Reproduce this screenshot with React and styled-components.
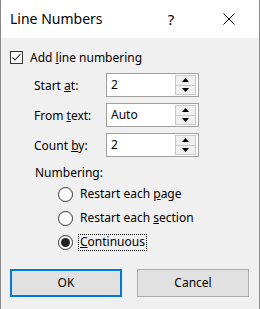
import React from "react";
import styled, { createGlobalStyle } from "styled-components";

const Global = createGlobalStyle`
  html, body { margin: 0; padding: 0; background: #f0f0f0; }
  body { font-family: "Segoe UI", "Noto Sans", "Open Sans", sans-serif; }
`;

const Window = styled.div`
  width: 260px;
  height: 309px;
  box-sizing: border-box;
  border-left: 1px solid #8a8a8a;
  border-right: 1px solid #8a8a8a;
  background: #f0f0f0;
  display: flex;
  flex-direction: column;
  color: #000;
  font-size: 12px;
`;

const TitleBar = styled.div`
  height: 38px;
  background: #fff;
  display: flex;
  align-items: center;
  padding-left: 9px;
  padding-right: 7px;
  flex-shrink: 0;
`;

const Title = styled.div`
  font-size: 14px;
  flex: 1;
  padding-bottom: 1px;
`;

const TitleButton = styled.div`
  width: 46px;
  margin-right: ${(p) => p.$gap || 0}px;
  display: flex;
  justify-content: center;
  align-items: center;
  font-size: 15px;
`;

const Body = styled.div`
  display: flex;
  flex-direction: column;
  padding: 12px 9px 0 9px;
`;

const CheckRow = styled.label`
  display: flex;
  align-items: center;
  height: 14px;
  gap: 7px;
`;

const CheckBox = styled.span`
  width: 13px;
  height: 13px;
  box-sizing: border-box;
  border: 1px solid #333;
  background: #fff;
  display: flex;
  align-items: center;
  justify-content: center;
`;

const Fields = styled.div`
  display: flex;
  flex-direction: column;
  gap: 6px;
  margin-top: 9px;
  padding-left: 24px;
`;

const FieldRow = styled.div`
  display: grid;
  grid-template-columns: 72px 93px;
  align-items: center;
  height: 24px;
`;

const SpinBox = styled.div`
  height: 24px;
  box-sizing: border-box;
  border: 1px solid #a0a0a0;
  background: #fff;
  display: flex;
  align-items: stretch;
  padding: 1px 2px 1px 0;
`;

const SpinValue = styled.div`
  flex: 1;
  display: flex;
  align-items: center;
  padding-left: 4px;
  padding-bottom: 1px;
`;

const SpinButtons = styled.div`
  width: 21px;
  display: flex;
  flex-direction: column;
`;

const SpinButton = styled.div`
  flex: 1;
  box-sizing: border-box;
  border: 1px solid #c8c8c8;
  background: #f0f0f0;
  display: flex;
  align-items: center;
  justify-content: center;
  & + & { border-top: none; }
`;

const GroupLabel = styled.div`
  margin-top: 7px;
  padding-left: 25px;
  height: 16px;
  display: flex;
  align-items: center;
`;

const Radios = styled.div`
  display: flex;
  flex-direction: column;
  gap: 9px;
  margin-top: 7px;
  padding-left: 48px;
`;

const RadioRow = styled.div`
  display: flex;
  align-items: center;
  gap: 6px;
  height: 15px;
`;

const RadioCircle = styled.span`
  width: 15px;
  height: 15px;
  box-sizing: border-box;
  border-radius: 50%;
  border: 1px solid #333;
  background: #fff;
  display: flex;
  align-items: center;
  justify-content: center;
  &::after {
    content: "";
    display: ${(p) => (p.$on ? "block" : "none")};
    width: 9px;
    height: 9px;
    border-radius: 50%;
    background: #222;
  }
`;

const RadioText = styled.span`
  padding: 0 1px 1px 1px;
  outline: ${(p) => (p.$focus ? "1px dotted #000" : "none")};
  line-height: 14px;
`;

const ButtonRow = styled.div`
  display: flex;
  gap: 15px;
  margin-top: 19px;
`;

const Button = styled.div`
  width: 112px;
  height: 28px;
  box-sizing: border-box;
  background: #e1e1e1;
  border: ${(p) => (p.$primary ? "2px solid #0078d7" : "1px solid #adadad")};
  display: flex;
  align-items: center;
  justify-content: center;
  font-size: 12px;
  padding-bottom: 1px;
`;

const Up = () => (
  <svg width="7" height="4" viewBox="0 0 7 4"><path d="M0 4 L3.5 0 L7 4 Z" fill="#000" /></svg>
);
const Down = () => (
  <svg width="7" height="4" viewBox="0 0 7 4"><path d="M0 0 L7 0 L3.5 4 Z" fill="#000" /></svg>
);

const Spin = ({ label, value }) => (
  <FieldRow>
    <span>{label}</span>
    <SpinBox>
      <SpinValue>{value}</SpinValue>
      <SpinButtons>
        <SpinButton><Up /></SpinButton>
        <SpinButton><Down /></SpinButton>
      </SpinButtons>
    </SpinBox>
  </FieldRow>
);

export default function App() {
  return (
    <>
      <Global />
      <Window>
        <TitleBar>
          <Title>Line Numbers</Title>
          <TitleButton $gap={12}>?</TitleButton>
          <TitleButton>
            <svg width="12" height="12" viewBox="0 0 12 12">
              <path d="M0.5 0.5 L11.5 11.5 M11.5 0.5 L0.5 11.5" stroke="#000" strokeWidth="1" />
            </svg>
          </TitleButton>
        </TitleBar>
        <Body>
          <CheckRow>
            <CheckBox>
              <svg width="11" height="11" viewBox="0 0 11 11">
                <path d="M1.5 5.5 L4 8 L9.5 2" stroke="#222" strokeWidth="1.1" fill="none" />
              </svg>
            </CheckBox>
            <span>Add <u>l</u>ine numbering</span>
          </CheckRow>
          <Fields>
            <Spin label={<>Start <u>a</u>t:</>} value="2" />
            <Spin label={<>From <u>t</u>ext:</>} value="Auto" />
            <Spin label={<>Count <u>b</u>y:</>} value="2" />
          </Fields>
          <GroupLabel>Numbering:</GroupLabel>
          <Radios>
            <RadioRow>
              <RadioCircle />
              <RadioText>Restart each <u>p</u>age</RadioText>
            </RadioRow>
            <RadioRow>
              <RadioCircle />
              <RadioText>Restart each <u>s</u>ection</RadioText>
            </RadioRow>
            <RadioRow>
              <RadioCircle $on />
              <RadioText $focus><u>C</u>ontinuous</RadioText>
            </RadioRow>
          </Radios>
          <ButtonRow>
            <Button $primary>OK</Button>
            <Button>Cancel</Button>
          </ButtonRow>
        </Body>
      </Window>
    </>
  );
}
